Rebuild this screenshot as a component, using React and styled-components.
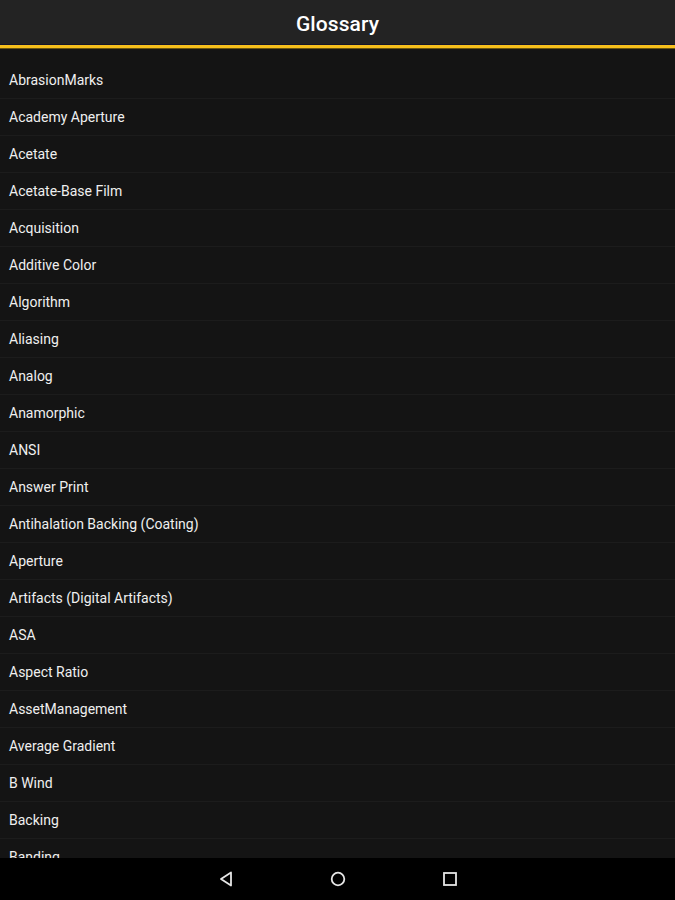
import React from "react";
import styled, { createGlobalStyle } from "styled-components";

const terms = [
  "AbrasionMarks",
  "Academy Aperture",
  "Acetate",
  "Acetate-Base Film",
  "Acquisition",
  "Additive Color",
  "Algorithm",
  "Aliasing",
  "Analog",
  "Anamorphic",
  "ANSI",
  "Answer Print",
  "Antihalation Backing (Coating)",
  "Aperture",
  "Artifacts (Digital Artifacts)",
  "ASA",
  "Aspect Ratio",
  "AssetManagement",
  "Average Gradient",
  "B Wind",
  "Backing",
  "Banding",
  "Base",
];

const GlobalStyle = createGlobalStyle`
  html, body {
    margin: 0;
    padding: 0;
    background: #141414;
  }
  * {
    box-sizing: border-box;
  }
`;

const Screen = styled.div`
  width: 675px;
  height: 900px;
  display: flex;
  flex-direction: column;
  background: #141414;
  font-family: Roboto, "Liberation Sans", sans-serif;
  overflow: hidden;
`;

const Header = styled.header`
  flex: 0 0 auto;
  height: 45px;
  padding-top: 4px;
  background: #232323;
  border-bottom: 1px solid #14142a;
  display: flex;
  align-items: center;
  justify-content: center;
`;

const Title = styled.h1`
  margin: 0;
  color: #fff;
  font-size: 21px;
  font-weight: 500;
  letter-spacing: 0.1px;
`;

const Accent = styled.div`
  flex: 0 0 auto;
  height: 4px;
  background: #f5bf1c;
  border-bottom: 1px solid #6b5510;
`;

const List = styled.ul`
  flex: 1;
  margin: 0;
  padding: 13px 0 0;
  list-style: none;
  overflow: hidden;
`;

const Row = styled.li`
  height: 37px;
  display: flex;
  align-items: center;
  padding: 0 9px;
  border-bottom: 1px solid #1c1c1c;
  color: #efefef;
  font-size: 14px;
`;

const NavBar = styled.nav`
  flex: 0 0 auto;
  height: 42px;
  background: #000;
  display: flex;
  align-items: center;
  justify-content: center;
  gap: 96px;
`;

const NavButton = styled.button`
  width: 16px;
  height: 16px;
  padding: 0;
  border: none;
  background: none;
  display: flex;
  align-items: center;
  justify-content: center;
`;

export default function App() {
  return (
    <Screen>
      <GlobalStyle />
      <Header>
        <Title>Glossary</Title>
      </Header>
      <Accent />
      <List>
        {terms.map((t) => (
          <Row key={t}>{t}</Row>
        ))}
      </List>
      <NavBar>
        <NavButton aria-label="Back">
          <svg width="16" height="16" viewBox="0 0 16 16">
            <path d="M13 1.5 L3 8 L13 14.5 Z" fill="none" stroke="#e6e6e6" strokeWidth="1.8" strokeLinejoin="round" />
          </svg>
        </NavButton>
        <NavButton aria-label="Home">
          <svg width="16" height="16" viewBox="0 0 16 16">
            <circle cx="8" cy="8" r="6.3" fill="none" stroke="#e6e6e6" strokeWidth="1.8" />
          </svg>
        </NavButton>
        <NavButton aria-label="Recents">
          <svg width="16" height="16" viewBox="0 0 16 16">
            <rect x="2" y="2" width="12" height="12" fill="none" stroke="#e6e6e6" strokeWidth="1.8" />
          </svg>
        </NavButton>
      </NavBar>
    </Screen>
  );
}
